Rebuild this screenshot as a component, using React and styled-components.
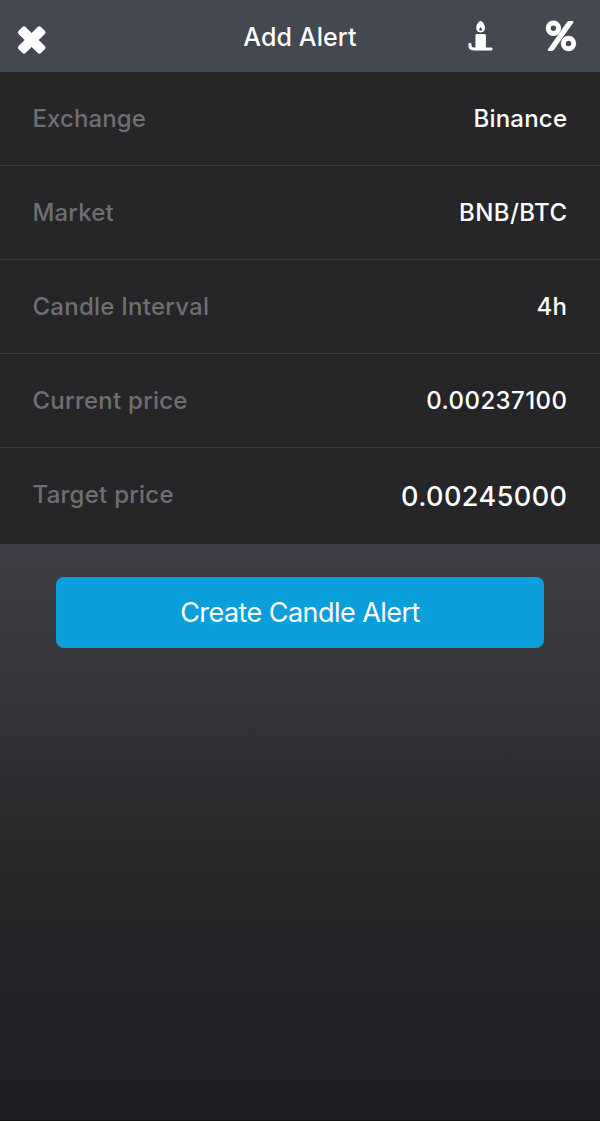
import React from "react";
import styled, { createGlobalStyle } from "styled-components";

const GlobalStyle = createGlobalStyle`
  body {
    margin: 0;
    background-color: #1f2023;
  }
  * {
    box-sizing: border-box;
  }
`;

const Screen = styled.div`
  display: flex;
  flex-direction: column;
  width: 100%;
  height: 1121px;
  font-family: Inter, "Liberation Sans", sans-serif;
  color: #fff;
  background-color: #262628;
`;

const Header = styled.header`
  display: grid;
  grid-template-columns: 1fr auto 1fr;
  align-items: center;
  height: 72px;
  padding: 0 23px 0 17px;
  background-color: #444850;
`;

const Title = styled.h1`
  margin: 0;
  padding: 2px 0 0 6px;
  font-size: 25px;
  line-height: 70px;
  font-weight: 500;
  letter-spacing: 0.1px;
`;

const Actions = styled.div`
  display: flex;
  justify-content: flex-end;
  align-items: center;
  gap: 52px;
`;

const IconButton = styled.button`
  display: flex;
  justify-self: start;
  padding: ${(props) => props.$top || 0}px 0 0;
  border: none;
  background: none;
  color: #fff;
  cursor: pointer;
`;

const List = styled.div`
  display: flex;
  flex-direction: column;
`;

const Row = styled.div`
  display: flex;
  justify-content: space-between;
  align-items: center;
  height: 94px;
  padding: 0 33px 0 32.5px;
  border-bottom: 1px solid #3d3d40;

  &:last-child {
    height: 96px;
    border-bottom: none;
  }
`;

const Label = styled.span`
  padding-bottom: ${(props) => (props.$large ? 2 : 0)}px;
  font-size: 24px;
  line-height: 30px;
  font-weight: 500;
  letter-spacing: ${(props) => props.$spacing}px;
  color: #6e6e73;
`;

const Value = styled.span`
  padding-top: ${(props) => (props.$large ? 2 : 0)}px;
  font-size: ${(props) => (props.$large ? 27 : 24)}px;
  line-height: 30px;
  font-weight: 500;
  letter-spacing: ${(props) => props.$spacing}px;
  margin-right: ${(props) => -props.$spacing}px;
`;

const Footer = styled.div`
  flex: 1;
  padding: 33px 56px 0;
  border-bottom: 1px solid #111214;
  background: linear-gradient(#3f3e46 0%, #38373c 20%, #28282b 55%, #212225 80%, #1f2023 100%);
`;

const CreateButton = styled.button`
  display: block;
  width: 100%;
  height: 71px;
  padding: 1px 0 0;
  border: none;
  border-radius: 8px;
  background-color: #0a9fdb;
  color: #fff;
  font-family: inherit;
  font-size: 27px;
  line-height: 70px;
  font-weight: 400;
  letter-spacing: -0.55px;
  cursor: pointer;
`;

const rows = [
  { label: "Exchange", value: "Binance", labelSpacing: 0.1, valueSpacing: 0.2 },
  { label: "Market", value: "BNB/BTC", labelSpacing: 0.15, valueSpacing: 0.4 },
  { label: "Candle Interval", value: "4h", labelSpacing: 0.25, valueSpacing: 0.3 },
  { label: "Current price", value: "0.00237100", labelSpacing: 0.25, valueSpacing: 0.42 },
  { label: "Target price", value: "0.00245000", labelSpacing: 0.25, valueSpacing: 0.45, large: true },
];

function CloseIcon() {
  return (
    <svg width="30" height="30" viewBox="0 0 30 30" fill="currentColor">
      <rect x="-1.1" y="10" width="31.6" height="10" rx="2.6" transform="rotate(45 14.7 15)" />
      <rect x="-1.1" y="10" width="31.6" height="10" rx="2.6" transform="rotate(-45 14.7 15)" />
    </svg>
  );
}

function CandleIcon() {
  return (
    <svg width="25" height="32" viewBox="0 0 25 32" fill="none">
      <path
        fillRule="evenodd"
        d="M12.6.8c2.7 1.2 4.4 4.4 4.4 7.3 0 2.7-1.8 4.3-4.4 4.3s-4.4-1.6-4.4-4.3c0-2.9 1.7-6.1 4.4-7.3zm0 6.4c-.8.8-1.4 1.5-1.4 2.2a1.4 1.4 0 0 0 2.8 0c0-.7-.6-1.4-1.4-2.2z"
        fill="currentColor"
      />
      <path d="M8.9 13.9h7.5q1.5 0 1.5 1.5v13H7.4v-13q0-1.5 1.5-1.5z" fill="currentColor" />
      <path
        d="M1.9 24.2v1q0 3.7 4 3.7h17.2"
        stroke="currentColor"
        strokeWidth="3"
        strokeLinecap="round"
      />
    </svg>
  );
}

function PercentIcon() {
  return (
    <svg width="32" height="32" viewBox="0 0 32 32" fill="none" stroke="currentColor">
      <circle cx="8.4" cy="8.3" r="5.2" strokeWidth="5" />
      <circle cx="23.5" cy="23.5" r="5.2" strokeWidth="5" />
      <path
        d="M24.2 1h3.1q2 0 .9 1.7L9.4 29.3q-1.1 1.6-2.8 1.6H4q-2.1 0-1-1.7L21.7 2.4q1-1.4 2.5-1.4z"
        fill="currentColor"
        stroke="none"
      />
    </svg>
  );
}

function App() {
  return (
    <>
      <GlobalStyle />
      <Screen>
        <Header>
          <IconButton aria-label="Close" $top={7}>
            <CloseIcon />
          </IconButton>
          <Title>Add Alert</Title>
          <Actions>
            <IconButton aria-label="Candle alert">
              <CandleIcon />
            </IconButton>
            <IconButton aria-label="Percent alert">
              <PercentIcon />
            </IconButton>
          </Actions>
        </Header>
        <List>
          {rows.map((row) => (
            <Row key={row.label}>
              <Label $spacing={row.labelSpacing} $large={row.large}>
                {row.label}
              </Label>
              <Value $spacing={row.valueSpacing} $large={row.large}>
                {row.value}
              </Value>
            </Row>
          ))}
        </List>
        <Footer>
          <CreateButton>Create Candle Alert</CreateButton>
        </Footer>
      </Screen>
    </>
  );
}

export default App;
